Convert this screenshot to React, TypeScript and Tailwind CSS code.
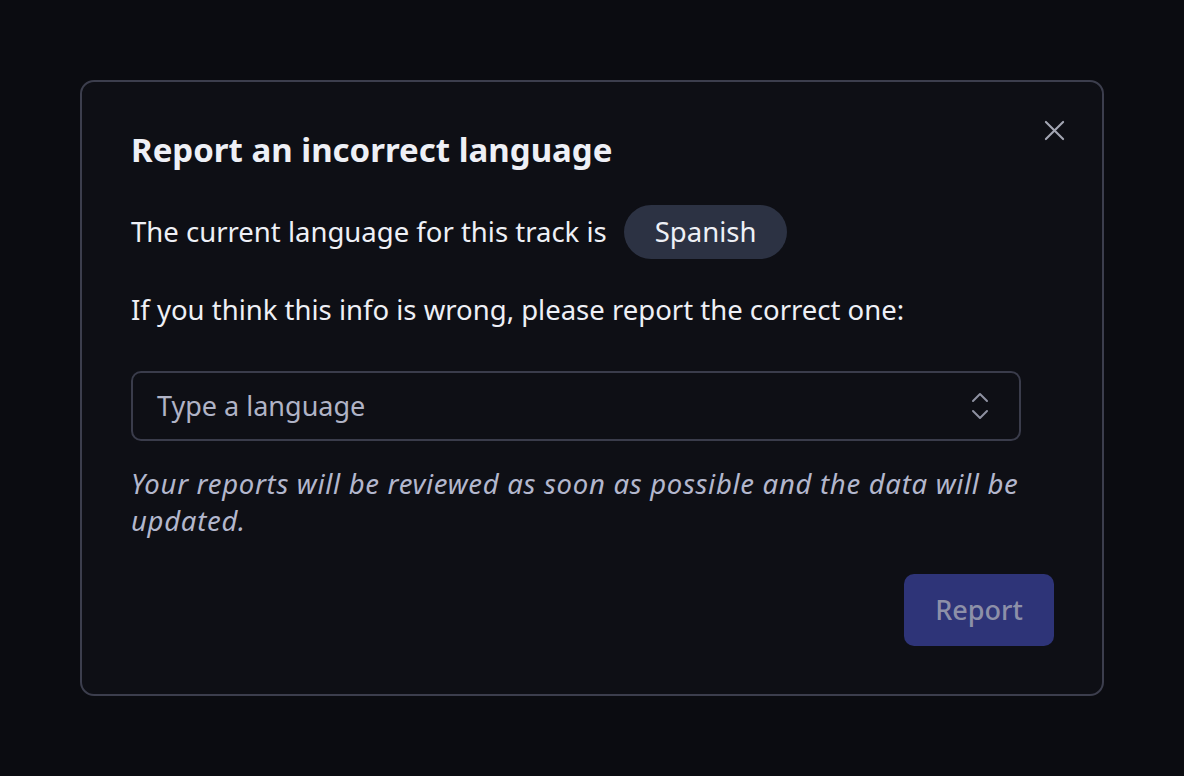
import React from "react";

export default function App() {
  return (
    <div
      className="w-[1184px] h-[776px] bg-[#0b0c11] flex items-start justify-center pt-[80px]"
      style={{ fontFamily: "'Noto Sans', sans-serif" }}
    >
      <div className="relative w-[1024px] h-[616px] rounded-[14px] border-2 border-[#3c3e4d] bg-[#0e0f15] pl-[49px] pr-[48px] pt-[46px]">
        <button className="absolute right-[36px] top-[36px] w-[24px] h-[24px] flex items-center justify-center text-[#a3a6b3]">
          <svg width="21" height="21" viewBox="0 0 22 22" fill="none" stroke="currentColor" strokeWidth="2.2" strokeLinecap="round">
            <path d="M2 2 L20 20 M20 2 L2 20" />
          </svg>
        </button>
        <h2 className="text-[33px] leading-[44px] font-bold text-[#eef0f6]">Report an incorrect language</h2>
        <div className="mt-[33px] flex items-center gap-[17px] text-[27.5px] text-[#eef0f6]">
          <span>The current language for this track is</span>
          <span className="h-[54px] px-[31px] rounded-full bg-[#2c3243] flex items-center">Spanish</span>
        </div>
        <p className="mt-[31px] text-[27.5px] leading-[40px] text-[#eef0f6]">
          If you think this info is wrong, please report the correct one:
        </p>
        <div className="mt-[41px] w-[890px] h-[70px] rounded-[10px] border-2 border-[#3a3c4b] flex items-center justify-between pl-[24px] pr-[30px]">
          <span className="text-[27px] text-[#b0b3c6]">Type a language</span>
          <svg width="18" height="28" viewBox="0 0 18 28" fill="none" stroke="#8e91a1" strokeWidth="2" strokeLinecap="round" strokeLinejoin="round">
            <path d="M2 9 L9 2 L16 9 M2 19 L9 26 L16 19" />
          </svg>
        </div>
        <p className="mt-[24px] text-[27.5px] leading-[37px] italic tracking-[0.7px] text-[#b3b7cd]">
          Your reports will be reviewed as soon as possible and the data will be updated.
        </p>
        <div className="mt-[35px] flex justify-end">
          <button className="w-[150px] h-[72px] rounded-[10px] bg-[#2e3478] text-[27px] font-medium text-[#8d90a8]">
            Report
          </button>
        </div>
      </div>
    </div>
  );
}
